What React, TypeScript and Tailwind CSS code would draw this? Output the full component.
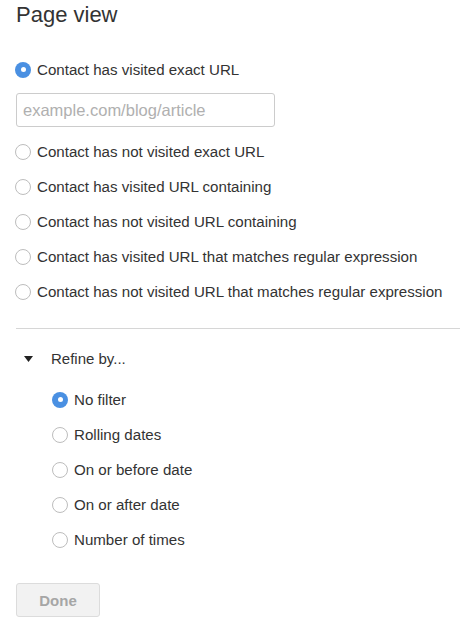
import React from "react";

function Radio({ checked, label }: { checked?: boolean; label: string }) {
  return (
    <div className="flex h-[35px] items-center gap-[6px]">
      {checked ? (
        <span className="flex h-[16px] w-[16px] items-center justify-center rounded-full bg-[#4a90e2]">
          <span className="h-[5px] w-[5px] rounded-full bg-white" />
        </span>
      ) : (
        <span className="h-[16px] w-[16px] rounded-full border border-[#bdbdbd] bg-white" />
      )}
      <span className="text-[15.1px] leading-none text-[#333]">{label}</span>
    </div>
  );
}

export default function App() {
  return (
    <div
      className="min-h-[636px] w-[460px] bg-white pl-[15px]"
      style={{ fontFamily: '"Liberation Sans", Arial, Helvetica, sans-serif' }}
    >
      <div className="pl-px pt-[3px] text-[22px] leading-[24px] text-[#333]">Page view</div>
      <div className="mt-[25px]">
        <Radio checked label="Contact has visited exact URL" />
      </div>
      <div className="ml-px mt-[6px] flex h-[34px] w-[259px] items-center rounded-[3px] border border-[#ccc] bg-white px-[6px]">
        <span className="text-[16.5px] leading-none text-[#b0b0b0]">example.com/blog/article</span>
      </div>
      <div className="mt-[7px] flex flex-col">
        <Radio label="Contact has not visited exact URL" />
        <Radio label="Contact has visited URL containing" />
        <Radio label="Contact has not visited URL containing" />
        <Radio label="Contact has visited URL that matches regular expression" />
        <Radio label="Contact has not visited URL that matches regular expression" />
      </div>
      <div className="ml-px mt-[19px] h-px bg-[#d6d6d6]" />
      <div className="mt-[12px] flex h-[35px] items-center">
        <svg width="9" height="6" viewBox="0 0 9 6" className="ml-[9px]">
          <path d="M0 0 L9 0 L4.5 6 Z" fill="#222" />
        </svg>
        <span className="ml-[18px] text-[15px] leading-none text-[#333]">Refine by...</span>
      </div>
      <div className="mt-[6px] flex flex-col pl-[37px]">
        <Radio checked label="No filter" />
        <Radio label="Rolling dates" />
        <Radio label="On or before date" />
        <Radio label="On or after date" />
        <Radio label="Number of times" />
      </div>
      <div className="ml-px mt-[26px] flex h-[34px] w-[84px] items-center justify-center rounded-[3px] border border-[#dcdcdc] bg-[#f2f2f2]">
        <span className="text-[15px] font-bold leading-none text-[#a6a6a6]">Done</span>
      </div>
    </div>
  );
}
